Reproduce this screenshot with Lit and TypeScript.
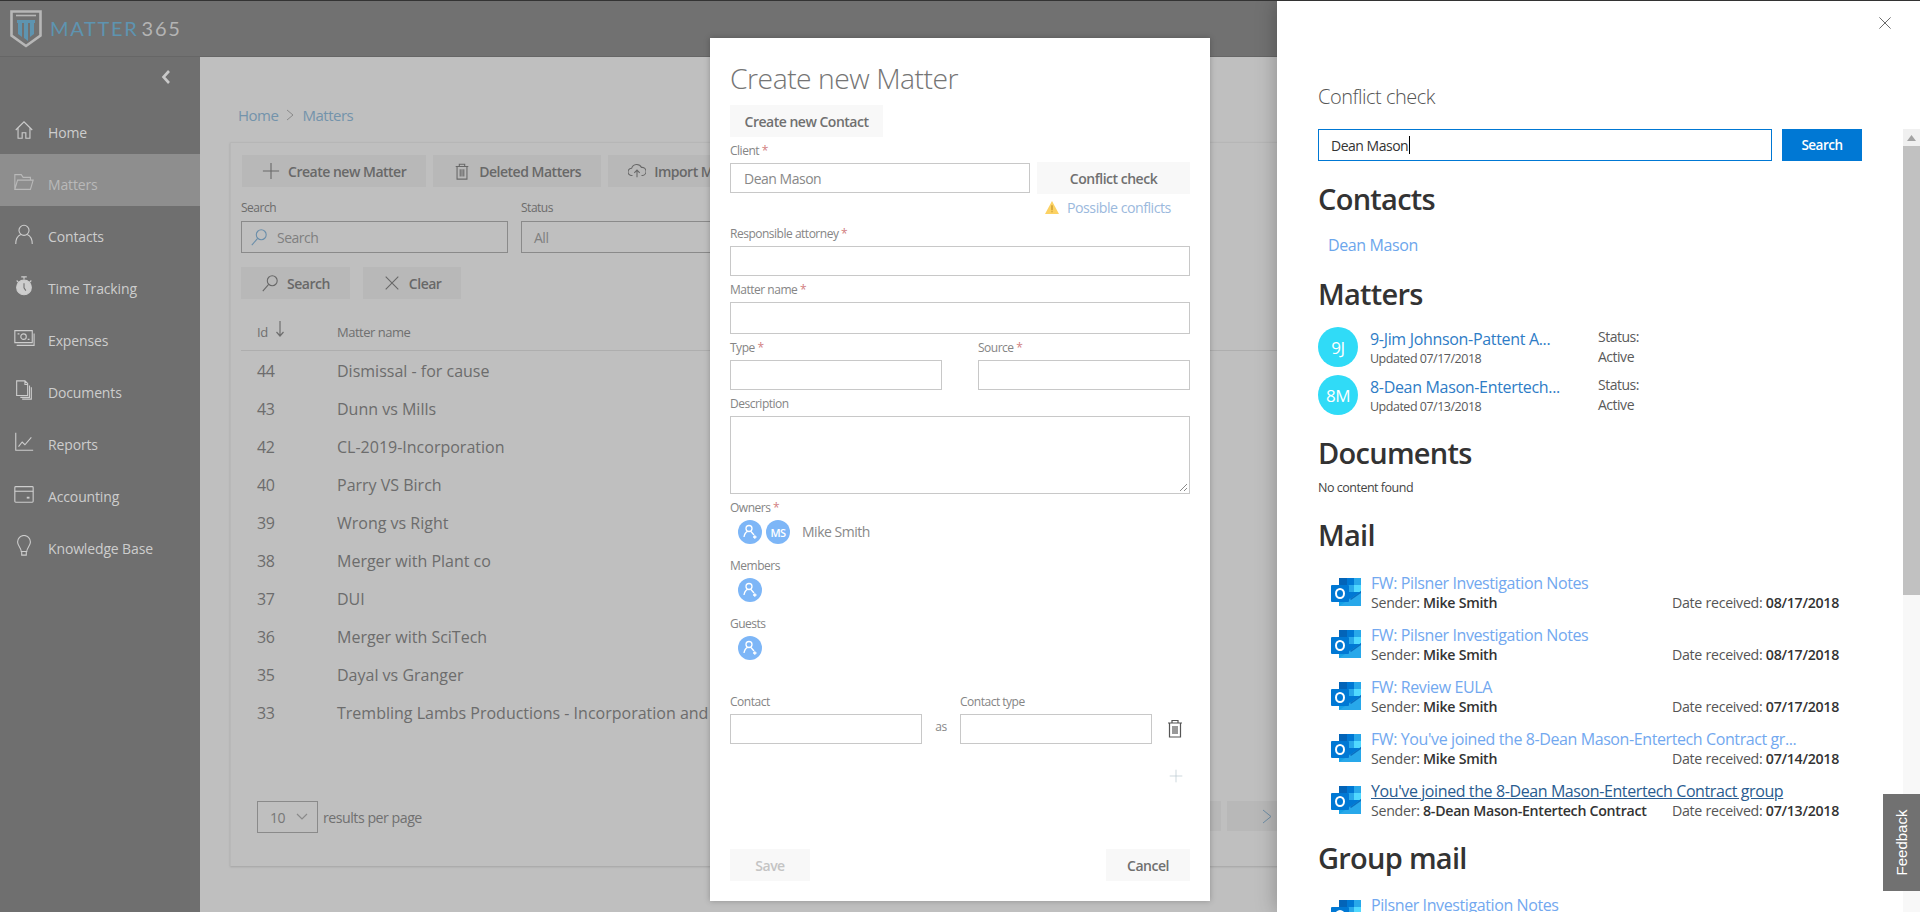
import { LitElement, html, css, svg } from "lit";
import { customElement } from "lit/decorators.js";

const navIcons: Record<string, unknown> = {
  home: svg`<path d="M3 12 12 3l9 9M5.500 10v11h4.500v-6h4v6h4.500V10"/>`,
  folder: svg`<path d="M2 20V4h7l2 3h8v3M2 20l3-10h17l-3 10H2Z"/>`,
  person: svg`<circle cx="12" cy="8" r="5.500"/><path d="M3 23c0-6 3-9.500 5.500-10.500M21 23c0-6-3-9.500-5.500-10.500"/>`,
  timer: svg`<circle cx="12" cy="13.500" r="8" fill="currentColor"/><path d="M12 2v3M9 2h6M4 6l2.500 2.500M20 6l-2.500 2.500"/><path d="M12 9v5l2 3" stroke="#717171"/>`,
  money: svg`<path d="M2 4h19v13H2zM4 20h19V7"/><circle cx="11.500" cy="10.500" r="3"/><path d="M5 7.500h2M16 13.500h2"/>`,
  docs: svg`<path d="M4 2h9l3 3v13H4zM13 2v4h3M18 7v13H8M20 9v13H10"/>`,
  chart: svg`<path d="M3 2v19h19M6 17l4-5 3 3 7-8"/>`,
  wallet: svg`<rect x="2" y="4" width="20" height="17" rx="1"/><path d="M2 9h20"/><path d="M15 16h3" stroke-width="2"/>`,
  bulb: svg`<path d="M9 18c0-4-4-6-4-10.500a7 7 0 0 1 14 0C19 12 15 14 15 18H9ZM9.500 18v4h5v-4"/>`,
};

const nav = [
  ["Home", "home"],
  ["Matters", "folder"],
  ["Contacts", "person"],
  ["Time Tracking", "timer"],
  ["Expenses", "money"],
  ["Documents", "docs"],
  ["Reports", "chart"],
  ["Accounting", "wallet"],
  ["Knowledge Base", "bulb"],
];

const rows = [
  ["44", "Dismissal - for cause"],
  ["43", "Dunn vs Mills"],
  ["42", "CL-2019-Incorporation"],
  ["40", "Parry VS Birch"],
  ["39", "Wrong vs Right"],
  ["38", "Merger with Plant co"],
  ["37", "DUI"],
  ["36", "Merger with SciTech"],
  ["35", "Dayal vs Granger"],
  ["33", "Trembling Lambs Productions - Incorporation and Funding"],
];

const mails = [
  ["FW: Pilsner Investigation Notes", "Mike Smith", "08/17/2018"],
  ["FW: Pilsner Investigation Notes", "Mike Smith", "08/17/2018"],
  ["FW: Review EULA", "Mike Smith", "07/17/2018"],
  ["FW: You've joined the 8-Dean Mason-Entertech Contract gr...", "Mike Smith", "07/14/2018"],
  ["You've joined the 8-Dean Mason-Entertech Contract group", "8-Dean Mason-Entertech Contract", "07/13/2018"],
];

const trash = svg`<path d="M3 5h14M7 5V2.500h6V5M4.500 5v14h11V5M8 8v8M10 8v8M12 8v8"/>`;
const searchGlass = svg`<circle cx="12.500" cy="7.500" r="5.500"/><path d="M8.500 11.500 2 19"/>`;
const cross = svg`<path d="M3 3l14 14M17 3 3 17"/>`;
const plus = svg`<path d="M10 1v18M1 10h18"/>`;

const outlook = html`<svg class="ol" viewBox="0 0 32 28">
  <rect x="8" y="0" width="8" height="7" fill="#0364b8"/>
  <rect x="16" y="0" width="7" height="7" fill="#0078d4"/>
  <rect x="23" y="0" width="7" height="7" fill="#28a8ea"/>
  <rect x="8" y="7" width="8" height="7" fill="#0078d4"/>
  <rect x="16" y="7" width="7" height="7" fill="#28a8ea"/>
  <rect x="23" y="7" width="7" height="7" fill="#50d9ff"/>
  <rect x="8" y="14" width="8" height="8" fill="#0364b8"/>
  <rect x="16" y="14" width="14" height="8" fill="#0078d4"/>
  <path d="M30 13v15H8V14l11 7Z" fill="#14a0e6"/>
  <path d="M8 28l22-14v14Z" fill="#28a8ea"/>
  <path d="M19 21 30 13v2L20 22Z" fill="#0a6fc2"/>
  <rect x="0" y="7" width="18" height="17" rx="1" fill="#0078d4"/>
  <ellipse cx="9" cy="15.500" rx="4" ry="4.600" fill="none" stroke="#fff" stroke-width="2"/>
</svg>`;

const addPerson = html`<span class="circle"><svg viewBox="0 0 24 24" class="pa">
  <circle cx="11" cy="8.500" r="3"/><path d="M6 17c.5-3.500 2-5 3.500-5.700M13 11.500l3 3.500"/><path d="M15 17h3.500M16.800 15.300v3.400"/>
</svg></span>`;

@customElement("app-root")
export class AppRoot extends LitElement {
  static styles = css`
    :host {
      display: block;
      position: relative;
      width: 1920px;
      height: 912px;
      overflow: hidden;
      background: #bfbfbf;
      font-family: "Open Sans", "Noto Sans", sans-serif;
      font-size: 14px;
      letter-spacing: -0.035em;
      color: #707070;
    }
    svg { display: block; fill: none; stroke: currentColor; stroke-width: 1.2; flex: none; }
    .topline { position: absolute; left: 0; top: 0; width: 100%; height: 1px; background: #333; z-index: 5; }
    .header {
      height: 57px; box-sizing: border-box; background: #717171;
      border-bottom: 1px solid #666; display: flex; align-items: center; padding: 1px 0 0 10px;
    }
    .shield { width: 32px; height: 38px; stroke-width: 0; }
    .brand { margin-left: 8px; font-family: Lato, sans-serif; font-size: 20px; letter-spacing: 1.700px; color: #5e94b0; line-height: 24px; margin-top: -1px; }
    .brand b { font-weight: 400; color: #b4b4b4; margin-left: 3px; }
    .body { display: flex; height: 855px; }
    .side { width: 200px; flex: none; background: #6f6f6f; color: #cdcdcd; }
    .chev { height: 45px; display: flex; justify-content: flex-end; padding: 12px 29px 0 0; box-sizing: border-box; color: #c9c9c9; }
    .chev svg { width: 10px; height: 16px; stroke-width: 2.600; }
    .nav { height: 52px; box-sizing: border-box; padding: 8px 0 0 13px; display: flex; align-items: center; gap: 13px; letter-spacing: -0.01em; }
    .nav.on { background: #8e8e8e; color: #b9b9b9; }
    .nav svg { width: 22px; height: 22px; margin-bottom: 4px; }
    .main { flex: 1; padding: 48px 0 0 30px; min-width: 0; }
    .crumb { height: 20px; line-height: 20px; color: #7393ab; display: flex; align-items: center; gap: 8px; margin-left: 8px; font-size: 15px; }
    .crumb svg { width: 8px; height: 12px; color: #8a8a8a; stroke-width: 1; }
    .card {
      margin-top: 17px; width: 1660px; box-sizing: border-box; padding: 12px 12px 33px 10px;
      border-top: 1px solid #b6b6b6; border-left: 1px solid #b8b8b8; box-shadow: 0 1px 2px rgba(0,0,0,.15);
    }
    .tools { display: flex; gap: 7px; margin-left: 1px; }
    .bbtn {
      height: 32px; background: #b8b8b8; display: flex; align-items: center; gap: 8px;
      padding: 0 20px; box-sizing: border-box; color: #686868; font-weight: 600; font-size: 14px; white-space: nowrap;
    }
    .bbtn svg { width: 18px; height: 18px; }
    .filters { display: flex; gap: 13px; margin-top: 13px; }
    .flabel { font-size: 12px; line-height: 16px; color: #6c6c6c; margin-bottom: 5px; }
    .binput { height: 32px; box-sizing: border-box; border: 1px solid #8a8a8a; display: flex; align-items: center; gap: 9px; padding: 0 8px; color: #808080; }
    .binput svg { width: 18px; height: 18px; color: #6a8eaa; }
    .w267 { width: 267px; }
    .w420 { width: 420px; padding-left: 12px; }
    .acts { display: flex; gap: 13px; margin-top: 14px; }
    .acts .bbtn { padding: 0 20px; }
    .thead { height: 37px; box-sizing: border-box; border-bottom: 1px solid #aeaeae; margin-top: 15px; display: flex; align-items: center; padding-left: 16px; color: #6f6f6f; font-size: 13px; }
    .thead span:first-child { width: 18px; }
    .thead svg { width: 10px; height: 18px; margin: -6px 0 0 0; }
    .thead .nm { margin-left: 52px; }
    .row { height: 38px; display: flex; align-items: center; padding-left: 16px; font-size: 16px; letter-spacing: 0; color: #6c6c6c; white-space: nowrap; }
    .thead + .row { margin-top: 1px; }
    .row .id { width: 80px; flex: none; letter-spacing: -0.03em; }
    .foot { margin-top: 69px; width: 1066px; padding-left: 16px; box-sizing: border-box; display: flex; align-items: center; gap: 5px; font-size: 14.200px; }
    .sel { width: 61px; height: 32px; box-sizing: border-box; border: 1px solid #8a8a8a; display: flex; align-items: center; gap: 11px; padding-left: 12px; color: #777; font-size: 14px; }
    .sel svg { width: 12px; height: 8px; color: #8a8a8a; }
    .pager { margin-left: auto; display: flex; gap: 6px; align-self: flex-start; }
    .pbtn { width: 80px; height: 30px; background: #b8b8b8; display: flex; align-items: center; justify-content: center; color: #6f8ea6; }
    .pbtn svg { width: 10px; height: 17px; stroke-width: 1; }

    .modal {
      position: absolute; left: 710px; top: 38px; width: 500px; height: 863px; box-sizing: border-box; background: #fff;
      padding: 22px 20px 20px; display: flex; flex-direction: column; box-shadow: 0 0 6px rgba(0,0,0,.25); color: #888; z-index: 2;
    }
    .mtitle { font-size: 28.300px; line-height: 36px; font-weight: 300; color: #757575; }
    .mbtn { height: 32px; background: #f8f8f8; display: flex; align-items: center; justify-content: center; color: #707070; font-weight: 600; font-size: 14px; box-sizing: border-box; white-space: nowrap; }
    .contact { width: 153px; margin-top: 9px; }
    .lab { font-size: 12px; line-height: 16px; color: #858585; margin-top: 6px; margin-bottom: 4px; }
    .lab i { color: #d2807f; font-style: normal; }
    .inp { height: 30px; box-sizing: border-box; border: 1px solid #c8c8c8; display: flex; align-items: center; padding-left: 13px; color: #888; }
    .inp.tall { height: 32px; }
    .clientrow { display: flex; align-items: center; gap: 7px; margin-top: -1px; height: 32px; }
    .clientrow .inp { width: 300px; }
    .clientrow .mbtn { width: 153px; }
    .warn { display: flex; align-items: center; gap: 8px; height: 18px; margin: 4px 0 4px 315px; color: #9bb9dd; font-size: 14.200px; }
    .warn svg { width: 14px; height: 13px; stroke: none; }
    .two { display: flex; justify-content: space-between; }
    .two > div { width: 212px; }
    .ta { height: 78px; box-sizing: border-box; border: 1px solid #c8c8c8; position: relative; }
    .grip { position: absolute; right: 1px; bottom: 1px; width: 9px; height: 9px; color: #8a8a8a; stroke-width: 1; }
    .people { display: flex; align-items: center; gap: 4px; height: 24px; padding-left: 8px; }
    .people .nm { margin: -2px 0 0 8px; font-size: 14px; }
    .circle { width: 24px; height: 24px; border-radius: 50%; background: #7db6f7; color: #fff; display: flex; align-items: center; justify-content: center; font-size: 11px; font-weight: 600; }
    .pa { width: 24px; height: 24px; stroke-width: 1.300; }
    .gapm { margin-top: 14px; }
    .gapc { margin-top: 28px; }
    .crow { display: flex; align-items: flex-end; }
    .crow > div.c { width: 192px; }
    .as { width: 38px; text-align: center; font-size: 12px; height: 30px; line-height: 26px; }
    .tr { width: 20px; height: 20px; margin: 0 0 6px 13px; color: #555; }
    .pl { width: 14px; height: 14px; color: #b7c7cf; margin: 25px 7px 0 auto; stroke-width: 1; }
    .mfoot { margin-top: auto; display: flex; justify-content: space-between; }
    .save { width: 80px; color: #c4c4c4; }
    .cancel { width: 84px; }

    .panel {
      position: absolute; left: 1277px; top: 0; width: 643px; height: 912px; box-sizing: border-box; background: #fff;
      box-shadow: 0 0 20px rgba(0,0,0,.28); padding: 82px 0 0 41px; overflow: hidden; z-index: 3; color: #333;
    }
    .x { position: absolute; left: 600px; top: 15px; width: 16px; height: 16px; color: #444; stroke-width: 1; }
    .ptitle { font-size: 20px; line-height: 30px; font-weight: 300; color: #555; }
    .sform { display: flex; gap: 10px; margin-top: 17px; }
    .pinput { width: 454px; height: 32px; box-sizing: border-box; border: 1px solid #0078d4; padding-left: 12px; display: flex; align-items: center; color: #333; }
    .caret { width: 1px; height: 18px; background: #000; margin-left: 1px; }
    .go { width: 80px; height: 32px; background: #0078d4; color: #fff; font-weight: 600; font-size: 13.500px; display: flex; align-items: center; justify-content: center; }
    h2 { margin: 19px 0 0; font-size: 29px; line-height: 38px; font-weight: 600; color: #333; letter-spacing: -0.025em; }
    .pcontact { margin: 17px 0 20px 10px; line-height: 20px; font-size: 16px; letter-spacing: -0.025em; color: #6ca6ec; }
    .pcontact + h2 { margin-top: 0; }
    .matters { margin-top: 14px; display: flex; flex-direction: column; gap: 8px; }
    .mrow { display: flex; height: 40px; }
    .pers { width: 40px; height: 40px; border-radius: 50%; background: #30dbf7; color: #fff; font-size: 17px; display: flex; align-items: center; justify-content: center; flex: none; }
    .minfo { width: 228px; margin-left: 12px; }
    .mname { line-height: 20px; margin-top: 2px; font-size: 16px; letter-spacing: -0.02em; color: #2e7cc6; white-space: nowrap; }
    .sm { font-size: 12.500px; line-height: 18px; margin-top: 1px; color: #5a5a5a; }
    .stat { font-size: 14px; line-height: 20px; color: #5a5a5a; }
    .none { margin-top: 6px; line-height: 20px; font-size: 12.500px; color: #444; }
    .h-doc { margin-top: 19px; }
    .h-mail { margin-top: 18px; }
    .mails { margin-top: 20px; }
    .mail { height: 52px; width: 521px; padding-left: 13px; box-sizing: border-box; display: flex; gap: 8px; }
    .ol { width: 32px; height: 28px; margin-top: 4px; stroke: none; }
    .mbody { flex: 1; min-width: 0; }
    .mt { line-height: 18px; font-size: 16px; letter-spacing: -0.025em; color: #72a8ef; white-space: nowrap; }
    .mail.u .mt { color: #2a5c90; text-decoration: underline; }
    .ms { display: flex; justify-content: space-between; font-size: 14.200px; letter-spacing: -0.02em; line-height: 18px; margin-top: 2px; color: #555; white-space: nowrap; }
    .ms b { font-weight: 600; color: #333; }
    .h-group { margin-top: 5px; }
    .glist { margin-top: 19px; }
    .track { position: absolute; left: 626px; top: 129px; width: 17px; height: 783px; background: #f8f8f8; }
    .up { height: 17px; display: flex; align-items: center; justify-content: center; background: #f0f0f0; }
    .up svg { width: 9px; height: 6px; stroke: none; fill: #a3a3a3; }
    .thumb { height: 449px; background: #c1c1c1; }
    .fb {
      position: absolute; left: 1883px; top: 794px; width: 37px; height: 97px; background: #717171; z-index: 4;
      display: flex; align-items: center; justify-content: center;
    }
    .fb span { transform: rotate(-90deg); color: #fff; font-family: "Liberation Sans", Arial, sans-serif; font-size: 15px; letter-spacing: 0; white-space: nowrap; }
  `;

  private field(label: string, req: boolean, tall = false) {
    return html`<div class="lab">${label}${req ? html` <i>*</i>` : ""}</div><div class="inp ${tall ? "tall" : ""}"></div>`;
  }

  private mailRow(m: string[], under = false) {
    return html`<div class="mail ${under ? "u" : ""}">
      ${outlook}
      <div class="mbody">
        <div class="mt">${m[0]}</div>
        <div class="ms"><span>Sender: <b>${m[1]}</b></span><span>Date received: <b>${m[2]}</b></span></div>
      </div>
    </div>`;
  }

  render() {
    return html`
      <div class="topline"></div>
      <div class="header">
        <svg class="shield" viewBox="0 0 32 38">
          <path d="M1.500 1.500h29v24L16 36 1.500 25.500Z" fill="none" stroke="#b7b7b7" stroke-width="2.600"/>
          <path d="M6 5.500h20" stroke="#b7b7b7" stroke-width="1.600"/>
          <path d="M7 10h18v3H7z" fill="#5e94b0"/>
          <path d="M8 13h4v14l-4-3zM14 13h4v18l-4-3zM20 13h4v11l-4 3z" fill="#5e94b0"/>
        </svg>
        <div class="brand">MATTER<b>365</b></div>
      </div>
      <div class="body">
        <aside class="side">
          <div class="chev"><svg viewBox="0 0 10 16"><path d="M8 2 2.500 8 8 14"/></svg></div>
          ${nav.map(([t, i]) => html`<div class="nav ${t === "Matters" ? "on" : ""}"><svg viewBox="0 0 24 24">${navIcons[i]}</svg><span>${t}</span></div>`)}
        </aside>
        <main class="main">
          <div class="crumb"><span>Home</span><svg viewBox="0 0 8 12"><path d="M1 1l6 5-6 5"/></svg><span>Matters</span></div>
          <section class="card">
            <div class="tools">
              <div class="bbtn"><svg viewBox="0 0 20 20">${plus}</svg>Create new Matter</div>
              <div class="bbtn"><svg viewBox="0 0 20 20">${trash}</svg>Deleted Matters</div>
              <div class="bbtn"><svg viewBox="0 0 20 20"><path d="M5 15H4a4 4 0 0 1 0-8 6 6 0 0 1 11-1 4.500 4.500 0 0 1 1 9h-1M10 9v8M7 12l3-3 3 3"/></svg>Import Matters</div>
            </div>
            <div class="filters">
              <div><div class="flabel">Search</div><div class="binput w267"><svg viewBox="0 0 20 20">${searchGlass}</svg>Search</div></div>
              <div><div class="flabel">Status</div><div class="binput w420">All</div></div>
            </div>
            <div class="acts">
              <div class="bbtn"><svg viewBox="0 0 20 20">${searchGlass}</svg>Search</div>
              <div class="bbtn"><svg viewBox="0 0 20 20">${cross}</svg>Clear</div>
            </div>
            <div class="thead"><span>Id</span><svg viewBox="0 0 10 18"><path d="M5 1v15M1.500 12 5 16l3.500-4"/></svg><span class="nm">Matter name</span></div>
            ${rows.map(([a, b]) => html`<div class="row"><span class="id">${a}</span><span>${b}</span></div>`)}
            <div class="foot">
              <div class="sel">10<svg viewBox="0 0 12 8"><path d="M1 1l5 5 5-5"/></svg></div>
              <span>results per page</span>
              <div class="pager">
                <div class="pbtn"></div>
                <div class="pbtn"><svg viewBox="0 0 10 17"><path d="M1 2l8 6.500-8 6.500"/></svg></div>
              </div>
            </div>
          </section>
        </main>
      </div>

      <div class="modal">
        <div class="mtitle">Create new Matter</div>
        <div class="mbtn contact">Create new Contact</div>
        <div class="lab">Client <i>*</i></div>
        <div class="clientrow"><div class="inp">Dean Mason</div><div class="mbtn">Conflict check</div></div>
        <div class="warn">
          <svg viewBox="0 0 13 12"><path d="M6.500 0 13 12H0Z" fill="#fcd264"/><path d="M6 4h1v4.500H6zM6 9.500h1v1H6z" fill="#b98a1e"/></svg>
          Possible conflicts
        </div>
        ${this.field("Responsible attorney", true)}
        ${this.field("Matter name", true, true)}
        <div class="two">
          <div>${this.field("Type", true)}</div>
          <div>${this.field("Source", true)}</div>
        </div>
        <div class="lab">Description</div>
        <div class="ta"><svg class="grip" viewBox="0 0 9 9"><path d="M8 1 1 8M8 5 5 8"/></svg></div>
        <div class="lab">Owners <i>*</i></div>
        <div class="people">${addPerson}<span class="circle">MS</span><span class="nm">Mike Smith</span></div>
        <div class="lab gapm">Members</div>
        <div class="people">${addPerson}</div>
        <div class="lab gapm">Guests</div>
        <div class="people">${addPerson}</div>
        <div class="crow gapc">
          <div class="c">${this.field("Contact", false)}</div>
          <div class="as">as</div>
          <div class="c">${this.field("Contact type", false)}</div>
          <svg class="tr" viewBox="0 0 20 20">${trash}</svg>
        </div>
        <svg class="pl" viewBox="0 0 20 20">${plus}</svg>
        <div class="mfoot">
          <div class="mbtn save">Save</div>
          <div class="mbtn cancel">Cancel</div>
        </div>
      </div>

      <div class="panel">
        <svg class="x" viewBox="0 0 20 20">${cross}</svg>
        <div class="ptitle">Conflict check</div>
        <div class="sform">
          <div class="pinput">Dean Mason<span class="caret"></span></div>
          <div class="go">Search</div>
        </div>
        <h2>Contacts</h2>
        <div class="pcontact">Dean Mason</div>
        <h2>Matters</h2>
        <div class="matters">
          <div class="mrow">
            <div class="pers">9J</div>
            <div class="minfo"><div class="mname">9-Jim Johnson-Pattent A...</div><div class="sm">Updated 07/17/2018</div></div>
            <div class="stat">Status:<br />Active</div>
          </div>
          <div class="mrow">
            <div class="pers">8M</div>
            <div class="minfo"><div class="mname">8-Dean Mason-Entertech...</div><div class="sm">Updated 07/13/2018</div></div>
            <div class="stat">Status:<br />Active</div>
          </div>
        </div>
        <h2 class="h-doc">Documents</h2>
        <div class="none">No content found</div>
        <h2 class="h-mail">Mail</h2>
        <div class="mails">${mails.map((m, i) => this.mailRow(m, i === 4))}</div>
        <h2 class="h-group">Group mail</h2>
        <div class="glist">${this.mailRow(["Pilsner Investigation Notes", "Mike Smith", "08/17/2018"])}</div>
        <div class="track">
          <div class="up"><svg viewBox="0 0 9 6"><path d="M4.500 0 9 6H0Z"/></svg></div>
          <div class="thumb"></div>
        </div>
      </div>
      <div class="fb"><span>Feedback</span></div>
    `;
  }
}
